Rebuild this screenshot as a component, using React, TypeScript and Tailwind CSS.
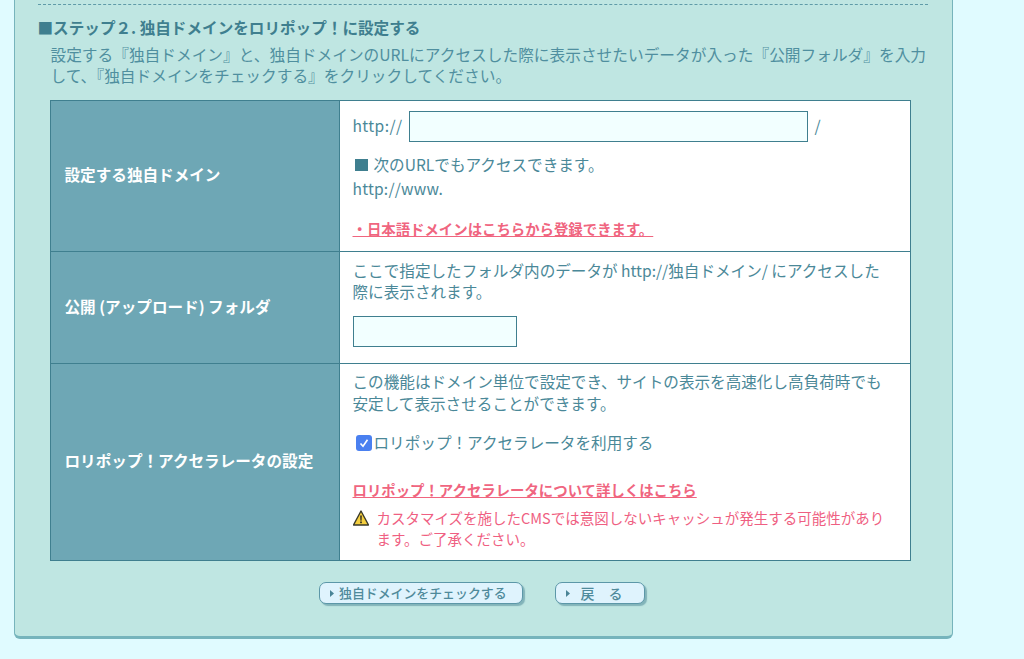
const FONT = "font-['Noto_Sans_CJK_JP','Noto_Sans',sans-serif]";

function RowLabel({ children }: { children: React.ReactNode }) {
  return (
    <div className="w-[289px] shrink-0 flex items-center pl-[14px] pb-[3px] bg-[#6ea7b5] border-r border-[#3f7f8f] text-white text-[15.6px] font-bold">
      {children}
    </div>
  );
}

function NavButton({ label, wide }: { label: string; wide?: boolean }) {
  return (
    <button
      className={`h-[22px] ${wide ? "w-[204px] gap-[5.5px] text-[12.9px]" : "w-[90px] gap-[11px] text-[14px]"} flex items-center pl-[10px] rounded-[7px] border-[1.5px] border-[#5c97a8] bg-[#dff3fd] shadow-[2px_2px_1px_rgba(70,130,145,0.5)] text-[#4f8a9b] font-medium leading-none`}
    >
      <svg width="4" height="7" viewBox="0 0 4 7" className="shrink-0">
        <path d="M0 0l4 3.5-4 3.5z" fill="#4a8496" />
      </svg>
      <span className="whitespace-pre">{label}</span>
    </button>
  );
}

export default function App() {
  return (
    <div className={`${FONT} h-[659px] overflow-hidden bg-[#e0fbff] pl-[14px] text-[#4a8898]`}>
      <div className="w-[939px] h-[639px] rounded-b-[6px] border-x-[1.5px] border-b-[3px] border-[#76b4bc] bg-[#bfe6e2] pl-[22.5px] pr-[24px] pt-[4px]">
        <div className="border-t border-dashed border-[#5f9ba8]" />
        <h2 className="mt-[12px] text-[15.6px] leading-[21px] font-bold text-[#3f7f8f]">
          ■ステップ２. 独自ドメインをロリポップ！に設定する
        </h2>
        <p className="mt-[6px] ml-[13px] w-[880px] text-[15.7px] leading-[21px] text-[#4f8f9f]">
          設定する『独自ドメイン』と、独自ドメインのURLにアクセスした際に表示させたいデータが入った『公開フォルダ』を入力して、『独自ドメインをチェックする』をクリックしてください。
        </p>

        <div className="mt-[14px] ml-[12px] w-[861px] border border-[#3f7f8f] bg-white text-[15.6px] leading-[21px]">
          <div className="flex h-[151px] border-b border-[#3f7f8f]">
            <RowLabel>設定する独自ドメイン</RowLabel>
            <div className="pl-[13px] pt-[10px]">
              <div className="flex items-center gap-[6px]">
                <span className="tracking-[0.4px] pb-[2px]">http://</span>
                <input className="ml-[1px] w-[399px] h-[31px] border border-[#3f7f8f] bg-[#f2ffff]" />
                <span className="pb-[2px]">/</span>
              </div>
              <p className="mt-[12px] flex items-center gap-[5px]">
                <span className="ml-[2px] mr-[1px] w-[13px] h-[12px] bg-[#3f7f8f]" />
                次のURLでもアクセスできます。
              </p>
              <p className="mt-[3px] tracking-[0.2px]">http://www.</p>
              <a className="inline-block mt-[19px] pr-[6px] font-bold text-[14.4px] text-[#f0657f] underline">
                ・日本語ドメインはこちらから登録できます。
              </a>
            </div>
          </div>

          <div className="flex h-[112px] border-b border-[#3f7f8f]">
            <RowLabel>公開 (アップロード) フォルダ</RowLabel>
            <div className="pl-[13px] pt-[8px]">
              <p className="w-[542px]">
                ここで指定したフォルダ内のデータが http://独自ドメイン/ にアクセスした際に表示されます。
              </p>
              <input className="block mt-[14px] w-[164px] h-[31px] border border-[#3f7f8f] bg-[#f2ffff]" />
            </div>
          </div>

          <div className="flex h-[196px]">
            <RowLabel>ロリポップ！アクセラレータの設定</RowLabel>
            <div className="pl-[13px] pt-[7px]">
              <p className="w-[542px] leading-[21.5px]">
                この機能はドメイン単位で設定でき、サイトの表示を高速化し高負荷時でも安定して表示させることができます。
              </p>
              <label className="mt-[18px] ml-[3px] flex items-center">
                <span className="w-[16px] h-[16px] rounded-[3px] bg-[#4a80f0] flex items-center justify-center">
                  <svg width="10" height="10" viewBox="0 0 10 10" fill="none">
                    <path d="M1.5 5.5l2.5 2.8 4.5-6.6" stroke="#fff" strokeWidth="1.6" />
                  </svg>
                </span>
                <span className="ml-[2px]">ロリポップ！アクセラレータを利用する</span>
              </label>
              <a className="block mt-[26px] font-bold text-[14.4px] text-[#f0657f] underline">
                ロリポップ！アクセラレータについて詳しくはこちら
              </a>
              <div className="mt-[7px] flex text-[14.5px] text-[#ef5f82]">
                <svg width="16" height="16" viewBox="0 0 16 16" className="shrink-0 mt-[3px]">
                  <path d="M8 1L15.5 15H.5z" fill="#f5cf3f" stroke="#3a3a2a" strokeWidth="1.4" strokeLinejoin="round" />
                  <path d="M7.2 5.5h1.6l-.3 5.2h-1z" fill="#222" />
                  <rect x="7.2" y="11.5" width="1.6" height="1.7" fill="#222" />
                </svg>
                <p className="ml-[8px] w-[510px]">
                  カスタマイズを施したCMSでは意図しないキャッシュが発生する可能性があります。ご了承ください。
                </p>
              </div>
            </div>
          </div>
        </div>

        <div className="mt-[21px] ml-[281px] flex gap-[32px]">
          <NavButton label="独自ドメインをチェックする" wide />
          <NavButton label="戻　る" />
        </div>
      </div>
    </div>
  );
}
